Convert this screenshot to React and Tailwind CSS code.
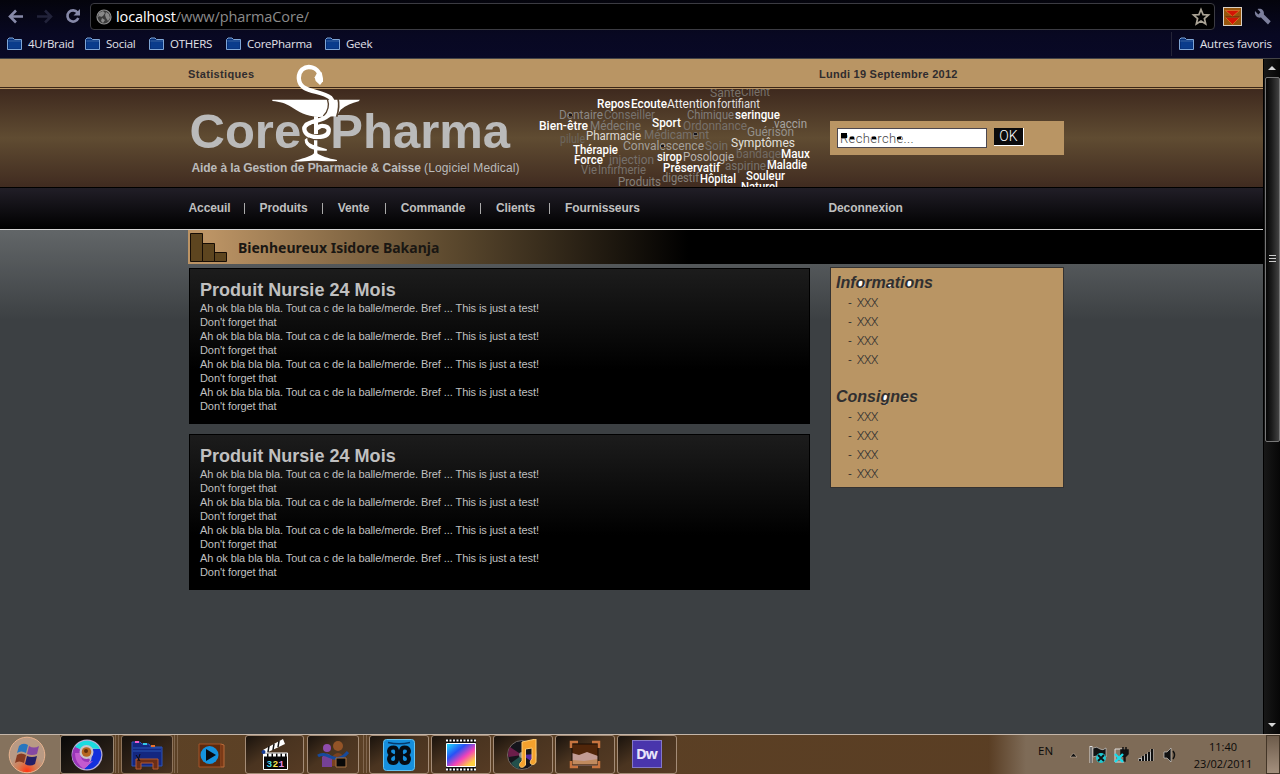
import React from "react";

const folders = [
  { name: "4UrBraid", cls: "w-[78px]" },
  { name: "Social", cls: "w-[64px]" },
  { name: "OTHERS", cls: "w-[77px]" },
  { name: "CorePharma", cls: "w-[99px]" },
  { name: "Geek", cls: "w-[60px]" },
];

function Folder() {
  return (
    <svg width="16" height="14" viewBox="0 0 16 14" className="mr-[5px] shrink-0">
      <path d="M.5 12.5V2.5L2 1H6L7.500 2.5H14.5V12.5Z" fill="#062f78" stroke="#7fa6d6" />
      <path d="M2 5H13.500V11.500H2Z" fill="#0a3c8c" />
      <path d="M1.500 4H14" stroke="#3d6fb0" />
    </svg>
  );
}

function BrowserChrome() {
  return (
    <header className="flex h-[59px] flex-col border-b border-[#444446] bg-linear-to-b/srgb from-[#04040c] via-[#080822] via-60% to-[#090926] font-['Open_Sans',sans-serif]">
      <div className="flex h-[31px] items-end">
        <svg width="90" height="31" viewBox="0 0 90 31" fill="none" className="shrink-0">
          <path d="M23 16.5H11M16 10.5L10 16.5L16 22.5" stroke="#8689a8" strokeWidth="2.6" />
          <path d="M37 16.5H49M45 10.5L51 16.5L45 22.5" stroke="#22233a" strokeWidth="2.6" />
          <path d="M77.5 12.5A5.6 5.6 0 1 0 78.3 18" stroke="#8689a8" strokeWidth="2.6" />
          <path d="M80 9V15.5H73.5Z" fill="#8689a8" />
        </svg>
        <div className="mb-px flex h-[27px] w-[1125px] items-center rounded-[4px] border border-[#3b3b42] bg-black pl-[5px]">
          <svg width="16" height="16" viewBox="0 0 16 16" className="mr-[4px] shrink-0">
            <circle cx="8" cy="8" r="7" fill="#3a3a3a" stroke="#909090" strokeWidth="1.2" />
            <path d="M3 4L7 2L9 4L7 7L5 8L4 7L2 8ZM10 3L13 5L14 9L12 12L10 9L9 6ZM6 9L9 11L7 14L5 12Z" fill="#888" />
          </svg>
          <span className="grow text-[14.5px] leading-[24px] tracking-[-0.1px] text-[#8b8b8b]">
            <span className="text-white">localhost</span>/www/pharmaCore/
          </span>
          <svg width="20" height="20" viewBox="0 0 20 20" className="mr-[3px]">
            <path d="M10 2.5L12.1 7.6L17.5 8L13.4 11.5L14.7 17L10 14.1L5.3 17L6.6 11.5L2.5 8L7.9 7.6Z" fill="none" stroke="#aaa395" strokeWidth="1.7" />
          </svg>
        </div>
        <svg width="20" height="20" viewBox="0 0 20 20" className="mb-[4px] ml-[8px]">
          <rect x=".5" y=".5" width="18" height="18" fill="#96550c" stroke="#d8cfc4" />
          <path d="M2.500 3.500H16.500L9.500 9.500ZM2.500 10.500H16.500L9.500 17.500Z" fill="#d41405" stroke="#e07a2c" strokeWidth=".7" />
          <path d="M2.500 10H16.500" stroke="#6b1a05" />
        </svg>
        <svg width="18" height="18" viewBox="0 0 18 18" className="mb-[5px] ml-[11px]">
          <path d="M1 3L4.3 6.4L6.5 4.2L3.5 1C7 0 10.5 2 9.9 6.5L16.7 13.3L14 16.4L7 9.6C3.5 10.4 .2 7.5 1 3Z" fill="#7c7f9c" />
        </svg>
      </div>
      <div className="flex h-[25px] items-center pl-[7px] text-[11.5px] leading-[16px] tracking-[-0.25px] text-[#e2e2ea]">
        {folders.map((f) => (
          <div key={f.name} className={"flex shrink-0 items-center whitespace-nowrap " + f.cls}>
            <Folder />
            <span>{f.name}</span>
          </div>
        ))}
        <div className="ml-auto flex h-[24px] w-[109px] items-center border-l border-[#252538] pl-[7px] whitespace-nowrap">
          <Folder />
          <span className="tracking-[-0.15px]">Autres favoris</span>
        </div>
      </div>
    </header>
  );
}

// Bowl of Hygieia emblem
function Emblem() {
  return (
    <svg className="absolute top-[5px] left-[272px]" width="88" height="99" viewBox="276 18 264 297" fill="none">
      <path d="M277 125H540L536 130C515 135 498 143 482 155L470 175L416 177C378 174 355 161 333 146C316 136 300 131 277 129Z" fill="#fff" />
      <path d="M442 122Q452 152 430 174" stroke="#54402d" strokeWidth="4" />
      <path d="M474 122Q480 144 470 176" stroke="#54402d" strokeWidth="5" />
      <path d="M402 175H414V228H402ZM402 246H412V286C420 293 445 302 471 306V309C445 312 420 308 402 308C380 307 360 313 342 310C363 302 390 298 402 286Z" fill="#fff" />
      <path d="M419 50C412 28 384 20 367 34C351 50 354 76 371 88C394 103 430 102 451 119C466 136 459 161 443 174C425 190 390 188 378 202" stroke="#fff" strokeWidth="13" />
      <path d="M411 45L425 43L429 61L429 70L420 81L407 69L404 58Z" fill="#fff" />
      <path d="M382 198C365 210 374 230 395 235C420 241 445 235 446 219C449 204 425 200 414 207L418 214" stroke="#fff" strokeWidth="13" />
      <path d="M380 243C381 263 410 265 440 276C415 278 376 272 376 246Z" fill="#fff" stroke="#fff" strokeWidth="4" />
      <path d="M388 240Q397 247 420 245" stroke="#54402d" strokeWidth="3" />
      <path d="M397 198V225" stroke="#54402d" strokeWidth="4" />
    </svg>
  );
}

// [word, x, baseline, width, fill]
const cloud = [
  ["Santé", 180, 13, 31, "#77716a"], ["Client", 211, 12, 29, "#77716a"],
  ["Repos", 67, 24, 33, "#fff"], ["Ecoute", 101, 24, 36, "#fff"], ["Attention", 137, 24, 49, "#eee"], ["fortifiant", 187, 24, 43, "#ddd"],
  ["Dentaire", 29, 35, 44, "#8b8785"], ["Conseiller", 74, 35, 51, "#77736f"], ["Chimique", 157, 35, 47, "#827e7c"], ["seringue", 205, 35, 45, "#fff"],
  ["Bien-être", 9, 46, 49, "#fff"], ["Médecine", 60, 46, 51, "#827e7a"], ["Sport", 122, 43, 29, "#fff"], ["Ordonnance", 153, 46, 64, "#77706a"], ["vaccin", 244, 44, 33, "#a6a3a0"],
  ["pilule", 30, 59, 25, "#6c665e"], ["Pharmacie", 56, 56, 55, "#ddd9d5"], ["Médicament", 114, 55, 65, "#77716b"], ["Guérison", 217, 52, 47, "#94918c"],
  ["Thérapie", 43, 70, 45, "#fff"], ["Convalescence", 93, 66, 81, "#a4a09b"], ["Soin", 175, 66, 23, "#75706b"], ["Symptômes", 201, 63, 64, "#e2e0dd"],
  ["Force", 44, 80, 29, "#fff"], ["injection", 79, 80, 45, "#75706c"], ["sirop", 127, 77, 25, "#fff"], ["Posologie", 153, 77, 51, "#b9b5b1"], ["bandage", 206, 74, 45, "#726a63"], ["Maux", 251, 74, 29, "#fff"],
  ["Vie", 51, 90, 16, "#77716b"], ["Infirmerie", 68, 90, 48, "#77716b"], ["Préservatif", 133, 88, 57, "#fff"], ["aspirine", 195, 86, 41, "#77726d"], ["Maladie", 237, 85, 40, "#fff"],
  ["Produits", 88, 102, 43, "#85807a"], ["digestif", 132, 98, 37, "#85817c"], ["Hôpital", 170, 99, 36, "#fff"], ["Souleur", 216, 96, 39, "#fff"], ["Naturel", 211, 107, 37, "#fff"],
];

function WordCloud() {
  return (
    <svg className="absolute top-[30px] left-[536px] overflow-hidden" width="276" height="98" viewBox="6 5 276 98" fontFamily="Roboto, sans-serif" fontSize="12.5">
      {cloud.map(([w, x, y, len, fill]) => (
        <text key={w} x={x} y={y} textLength={len} lengthAdjust="spacingAndGlyphs" fill={fill} fontWeight={fill === "#fff" ? 500 : 400}>{w}</text>
      ))}
      <path d="M39 30H42V32H39ZM164 49H167V51H164ZM131 61H134V63H131Z" fill="#15131a" />
    </svg>
  );
}

const nav = [
  ["Acceuil", "w-[55px]"], ["Produits", "w-[62px]"], ["Vente", "w-[47px]"],
  ["Commande", "w-[79px]"], ["Clients", "w-[53px]"], ["Fournisseurs", "w-[90px]"],
];

function SiteHeader() {
  return (
    <div className="relative">
      <div className="flex h-[28px] bg-[#b99564] pt-[8px] pl-[188px] text-[11px] leading-[14px] font-bold text-[#302c2e]">
        <span className="w-[631px] tracking-[0.35px]">Statistiques</span>
        <span className="tracking-[0.26px]">Lundi 19 Septembre 2012</span>
      </div>
      <div className="h-px bg-[#3a2617]" />
      <div className="h-px bg-[#b99564]" />
      <div className="flex h-[98px] bg-linear-to-b/srgb from-[#3e291e] via-[#604c32] via-50% to-[#402b20]">
        <div className="w-[830px] pl-[188px]">
          <h1 className="h-[70px] pt-[13px] pl-[1.5px] text-[49px] leading-[58px] font-bold whitespace-pre text-[#bababa] [word-spacing:1px]">Core  Pharma</h1>
          <p className="pl-[3.5px] text-[12px] leading-[18px] whitespace-nowrap text-[#bababa]">
            <b className="tracking-[-0.09px]">Aide à la Gestion de Pharmacie &amp; Caisse</b> <span className="tracking-[0.12px]">(Logiciel Medical)</span>
          </p>
        </div>
        <div className="mt-[32px] flex h-[34px] w-[234px] bg-[#b99564] pt-[7px] pl-[7px]">
          <div className="relative h-[20px] w-[150px] border border-[#4c4850] bg-white pl-[2px] font-[Roboto,sans-serif] text-[13px] leading-[20px] font-light tracking-[0.35px] text-[#444]">
            Recherche...
            <svg className="absolute top-[4px] left-[3px]" width="75" height="9" viewBox="0 0 75 9">
              <path d="M0 0H6V5H0ZM9 4H13V6H9ZM31 4H35V6H31ZM56 4H60V6H56Z" fill="#000" />
            </svg>
          </div>
          <div className="ml-[7px] flex h-[18px] w-[30px] items-center justify-center border-r border-b border-white bg-[#0b0b0d] font-[Roboto,sans-serif] text-[14px] font-light text-white">OK</div>
        </div>
      </div>
      <div className="h-px bg-black" />
      <nav className="flex h-[41px] bg-linear-to-b/srgb from-[#211e27] to-black pt-[12px] pl-[188.5px] text-[12px] leading-[16px] font-bold tracking-[-0.1px] text-[#bfbfbf]">
        {nav.map(([label, w], i) => (
          <React.Fragment key={label}>
            <span className={w}>{label}</span>
            {i < 5 && <span className="mt-[3px] mr-[15.1px] h-[11px] w-px bg-[#aaa]" />}
          </React.Fragment>
        ))}
        <span className="pl-[173.500px]">Deconnexion</span>
      </nav>
      <div className="h-px bg-[#d4d4d4]" />
      <WordCloud />
      <Emblem />
    </div>
  );
}

function Product() {
  return (
    <article className="h-[156px] w-[621px] border border-black bg-linear-to-b/srgb from-[#1c1c1c] to-black to-65% pt-[10px] pl-[10px] text-[#c0c0c0]">
      <h2 className="h-[22px] text-[18px] leading-[22px] font-bold tracking-[0.03px]">Produit Nursie 24 Mois</h2>
      {[0, 1, 2, 3].map((i) => (
        <p key={i} className="text-[11px] leading-[14px] tracking-[-0.08px]">
          Ah ok bla bla bla. Tout ca c de la balle/merde. Bref ... This is just a test!<br />Don't forget that
        </p>
      ))}
    </article>
  );
}

function Block({ title, children }) {
  return (
    <section className="h-[114px]">
      <h3 className="relative h-[25px] pt-[5px] pl-[5px] text-[16px] leading-[20px] font-bold italic">
        {children}
        <span className="relative">{title}</span>
      </h3>
      <ul className="pl-[17px] text-[11.5px] leading-[19px]">
        {[0, 1, 2, 3].map((i) => (
          <li key={i} className="flex gap-[5px]"><span>-</span><span className="font-[Roboto,sans-serif] text-[12.5px] font-light tracking-[-0.75px]">XXX</span></li>
        ))}
      </ul>
    </section>
  );
}

function Page() {
  return (
    <main className="h-[675px] w-[1263px] bg-[#3c4043] font-['Liberation_Sans',Arial,sans-serif]">
      <SiteHeader />
      <div className="flex h-[504px] flex-col bg-linear-to-b/srgb from-[#626668] to-[#3c4043] to-[90px]">
        <div className="ml-[188px] flex h-[34px] bg-linear-to-r/srgb from-[#bc9465] from-[20px] via-[#5c492e] via-[262px] to-black to-[500px] pt-[3px] pl-[2px]">
          <svg width="38" height="30" viewBox="0 0 38 30">
            <path d="M.5 .5H12.5V28.5H.5ZM12.5 10.5H24.5V28.5H12.5ZM24.5 19.5H36.5V28.5H24.5Z" fill="#5d451f" stroke="#160d05" />
          </svg>
          <span className="pt-[5px] pl-[10px] font-['Noto_Sans',sans-serif] text-[14px] leading-[20px] font-bold text-[#1a1713]">Bienheureux Isidore Bakanja</span>
        </div>
        <div className="mt-[3px] flex gap-[20px] pl-[189px]">
          <div className="flex flex-col gap-[10px] pt-px">
            <Product />
            <Product />
          </div>
          <aside className="h-[221px] w-[234px] border border-[#343231] bg-[#b99564] text-[#302f30]">
            <Block title="Informations">
              <svg className="absolute top-px left-0" width="110" height="25" viewBox="0 0 110 25" fill="#fff"><ellipse cx="30.5" cy="15" rx="3.4" ry="3.200" /><ellipse cx="59" cy="17" rx="2.5" ry="1.5" /><ellipse cx="78.5" cy="15" rx="3.4" ry="3.200" /></svg>
            </Block>
            <Block title="Consignes">
              <svg className="absolute top-px left-0" width="110" height="25" viewBox="0 0 110 25" fill="#fff"><ellipse cx="54.5" cy="15" rx="2.8" ry="3" /><ellipse cx="54" cy="21" rx="2.5" ry="1" /><ellipse cx="74.5" cy="14" rx="2.5" ry="1.5" /></svg>
            </Block>
          </aside>
        </div>
      </div>
    </main>
  );
}

function Scrollbar() {
  return (
    <div className="flex w-[17px] flex-col items-center border-l border-black bg-linear-to-r/srgb from-[#171717] to-[#070707]">
      <svg width="16" height="18" viewBox="0 0 16 18"><path d="M4 11L8 7L12 11Z" fill="#d5d5d5" /></svg>
      <div className="flex h-[365px] w-[15px] items-center justify-center rounded-[2px] border border-[#777] bg-linear-to-r/srgb from-[#050505] via-[#1c1c1c] via-45% to-[#424242]">
        <svg width="7" height="9" viewBox="0 0 7 9"><path d="M0 .5H7M0 3.5H7M0 6.5H7" stroke="#ccc" /></svg>
      </div>
      <svg className="mt-auto" width="16" height="18" viewBox="0 0 16 18"><path d="M4 7L8 11L12 7Z" fill="#d5d5d5" /></svg>
    </div>
  );
}

const icons = {
  chrome: (
    <>
      <circle cx="16" cy="16" r="15.500" fill="#b9b0d6" />
      <path d="M16 16L4.500 7A14 14 0 0 0 14 30L19 21Z" fill="#9a35b8" />
      <path d="M9 10L4 8A14.500 14.500 0 0 1 29 10L16 9Z" fill="#1bdbe0" />
      <path d="M16 10H29A14.500 14.500 0 0 1 13 30Q21 24 21 16Z" fill="#1230dc" />
      <path d="M9 14Q10 26 22 22L13 30Q4 24 4 14Z" fill="#c35ad0" />
      <circle cx="15.500" cy="13" r="7" fill="#c9c3c9" /><circle cx="15.500" cy="13" r="4.800" fill="#b5651f" /><circle cx="15" cy="12" r="2" fill="#5d2c0c" />
    </>
  ),
  explorer: (
    <>
      <path d="M1 27V3H9L11 5H18L20 8H31V27Z" fill="#142780" stroke="#2c55b8" />
      <path d="M2 9H30M2 12H30" stroke="#2b56b5" />
      <path d="M4 3H8" stroke="#f05ccc" strokeWidth="2" /><path d="M12 5H16" stroke="#35c7e6" strokeWidth="2" /><path d="M20 7H24" stroke="#e8702c" strokeWidth="2" />
      <path d="M5 20H27V30H22V24H10V30H5Z" fill="#6b2d16" stroke="#b65a30" />
      <path d="M5 16L9 22M9 15L7 22" stroke="#0a0a14" />
    </>
  ),
  media: (
    <>
      <path d="M4 5H26V28H4Z" fill="#5d2a0e" stroke="#a65529" /><path d="M26 5L29 6V28H26" fill="#7b3a17" stroke="#b86b3a" />
      <circle cx="14.500" cy="16" r="9" fill="#1593df" /><path d="M11 10L21 16L11 22Z" fill="#080b12" />
    </>
  ),
  clapper: (
    <>
      <path d="M4 11L24 0L26 5L5 15Z" fill="#fff" /><path d="M9 13L10 7M14 11L15 5M19 8L20 2" stroke="#111" strokeWidth="1.500" />
      <path d="M4.500 14H28.500V30.500H4.500Z" fill="#080808" stroke="#fff" /><path d="M5 16H28" stroke="#fff" strokeWidth="3" strokeDasharray="3 1.500" />
      <circle cx="4.500" cy="13" r="2" fill="#173c95" />
      <g fontFamily="Liberation Mono, monospace" fontSize="9.500" fontWeight="700"><text x="7.500" y="28" fill="#48dcee">3</text><text x="13.500" y="28" fill="#f4e34b">2</text><text x="19.500" y="28" fill="#e68ee9">1</text></g>
    </>
  ),
  people: (
    <>
      <circle cx="10" cy="9" r="4" fill="#8f4cac" /><path d="M5 28V18Q10 11 15 18V28Z" fill="#754197" />
      <circle cx="21" cy="7" r="5" fill="#945427" /><path d="M15 27V18Q21 10 27 18V27Z" fill="#79421f" />
      <path d="M1 17C11 10 17 29 31 13" fill="none" stroke="#164a9c" strokeWidth="3" /><path d="M19 19H29V28H19Z" fill="#080808" stroke="#aa7545" />
    </>
  ),
  xampp: (
    <>
      <rect x=".5" y=".5" width="31" height="31" rx="3" fill="#168fdd" stroke="#66c4f1" />
      <path d="M5 3.500Q16 6 27 3.500" stroke="#063a6d" strokeWidth="1.500" fill="none" />
      <path d="M10.500 8.500C5 8.500 5 14 8.500 16C5 18 5 24 10.500 24C15 24 14 18 14 18H18C18 18 17 24 21.500 24C27 24 27 18 23.500 16C27 14 27 8.500 21.500 8.500C17 8.500 18 14 18 14H14C14 14 15 8.500 10.500 8.500Z" fill="#168fdd" stroke="#060b13" strokeWidth="4" />
    </>
  ),
  film: (
    <>
      <defs><linearGradient id="film" x2="1" y2="1"><stop stopColor="#1be6fc" /><stop offset=".35" stopColor="#2852f5" /><stop offset=".6" stopColor="#f443b8" /><stop offset=".85" stopColor="#ffce43" /></linearGradient></defs>
      <path d="M1 0H31V32H1Z" fill="#101010" /><path d="M1.500 4.500H30.500V27.500H1.500Z" fill="url(#film)" stroke="#fff" />
      <path d="M1 1.500H31M1 30.500H31" stroke="#fff" strokeWidth="2" strokeDasharray="2 1.500" />
    </>
  ),
  music: (
    <>
      <circle cx="15" cy="16" r="14.500" fill="#15151b" stroke="#736964" /><path d="M15 16L3 8A14 14 0 0 0 1.500 18Z" fill="#6b1d49" /><path d="M15 16L4 24A14 14 0 0 0 12 30Z" fill="#23504b" /><path d="M15 16L29 15A14 14 0 0 1 27 24Z" fill="#552ca5" />
      <circle cx="15" cy="16" r="3" fill="#888" />
      <path d="M15 3L29 0V23C27 28 20 25 25 20V9L18.500 10V26C15 31 9 27 15 22Z" fill="#f4a12d" stroke="#ffcc72" />
    </>
  ),
  photo: (
    <>
      <path d="M3 5H29V27H3Z" fill="#c39c94" /><path d="M3 5H29V17L18 13L10 16L3 14Z" fill="#51260a" /><path d="M3 21L15 22L29 20V26H3Z" fill="#c08a5e" />
      <path d="M3 5H29V26H3Z" fill="none" stroke="#1a0d05" />
      <path d="M2 9V3H9M23 3H30V9M2 22V28H9M23 28H30V22" fill="none" stroke="#c8743f" strokeWidth="2.500" />
    </>
  ),
  dw: (
    <>
      <rect x="1.500" y="1.500" width="29" height="27" fill="#4935ac" stroke="#8478c7" />
      <text x="5" y="19.500" fill="#e8e4fa" fontFamily="Open Sans, sans-serif" fontSize="14.500" fontWeight="700" textLength="22">Dw</text>
    </>
  ),
};

const plain = "bg-linear-to-br/srgb from-[#1a130d] via-[#4a3420] via-45% to-[#563b24] border-[#a48c77]";

const tasks = [
  ["chrome", "w-[54px] bg-linear-to-br/srgb from-[#080808] to-[#35281d] border-[#9a8773]", "mr-[7px]"],
  ["explorer", "w-[52px] bg-linear-to-br/srgb from-[#16110d] to-[#4a3320] border-[#8e745c]", "mr-[7px]"],
  ["media", "w-[58px] border-transparent pl-[3px]", "mr-[7px]"],
  ["clapper", "w-[59px] " + plain, "mr-[3px]"],
  ["people", "w-[52px] " + plain, "mr-[10px]"],
  ["xampp", "w-[60px] " + plain, "mr-[2px]"],
  ["film", "w-[60px] " + plain, "mr-[2px]"],
  ["music", "w-[60px] " + plain, "mr-[2px]"],
  ["photo", "w-[60px] " + plain, "mr-[2px]"],
  ["dw", "w-[60px] " + plain, ""],
];

function Stack() {
  return <span className="mr-[2px] -ml-[6px] h-[38px] w-[4px] border-x border-[#80664d]" />;
}

function Taskbar() {
  return (
    <footer className="flex h-[40px] border-t border-[#c4b6a9] bg-linear-to-r/srgb from-[#5d4226] to-[#593d23] font-['Open_Sans',sans-serif] text-[#0b0a09]">
      <div className="flex w-[60px] items-center bg-[#85725d] pl-[8px]">
        <svg width="38" height="38" viewBox="0 0 38 38">
          <defs><radialGradient id="orb" cx=".5" cy=".95"><stop stopColor="#ff3512" /><stop offset=".5" stopColor="#d77a50" /><stop offset="1" stopColor="#b99a84" /></radialGradient></defs>
          <circle cx="19" cy="19" r="17.800" fill="url(#orb)" stroke="#e9b38e" />
          <path d="M11 10Q15 6 20 9L18 17Q13 14 9 17Z" fill="#2876bf" /><path d="M21 10Q26 13 31 10L29 18Q24 20 19 18Z" fill="#8548a3" />
          <path d="M9 19Q13 16 18 19L16 27Q11 24 7 27Z" fill="#863a20" /><path d="M19 20Q24 22 29 20L27 28Q22 31 17 28Z" fill="#231f66" />
        </svg>
      </div>
      {tasks.map(([id, cls, gap]) => (
        <React.Fragment key={id}>
          <div className={"flex h-[39px] shrink-0 items-center justify-center rounded-[3px] border " + cls + " " + gap}>
            <svg width="32" height="32" viewBox="0 0 32 32">{icons[id]}</svg>
          </div>
          {(id === "chrome" || id === "explorer" || id === "people") && <Stack />}
        </React.Fragment>
      ))}
      <div className="ml-auto flex h-full w-[292px] bg-linear-to-r/srgb from-[#593d23] to-[#7e6b57] to-[38px]">
        <span className="ml-[50px] w-[32px] pt-[8px] text-[11.5px] leading-[16px]">EN</span>
        <svg width="114" height="39" viewBox="0 0 114 39" className="shrink-0">
          <path d="M0 22L3.500 18L7 22Z" fill="#111" stroke="#c9b6a3" strokeWidth=".6" />
          <path d="M21 11V28" stroke="#ddd" strokeWidth="3" /><path d="M21 12V28" stroke="#111" />
          <path d="M23 13Q27 11 30 14Q33 16 36 13V22Q33 24 30 22Q26 20 23 22Z" fill="#111" stroke="#ddd" strokeWidth=".6" />
          <circle cx="31" cy="23" r="5" fill="#20c9d2" /><path d="M28 20L34 26M34 20L28 26" stroke="#111" strokeWidth="1.800" />
          <path d="M45 14H54V27H45Z" fill="#8a7865" stroke="#ddd" /><path d="M51 15H58V19L55 22V26H54V22L51 20ZM53 15V12M56 15V12" fill="#111" stroke="#111" strokeWidth="1.500" />
          <path d="M45 19L53 27M53 19L45 27" stroke="#19ddeb" strokeWidth="2.400" />
          <path d="M70 23V26M73 21V26M76 19V26M79 17V26M82 14V26" stroke="#bbb" strokeWidth="3" /><path d="M70 24V26M73 21V26M76 19V26M79 17V26M82 14V26" stroke="#111" strokeWidth="2" />
          <path d="M94 17H97L101 13V27L97 23H94Z" fill="#111" stroke="#ddd" strokeWidth=".6" /><path d="M103 16Q106 20 103 24" fill="none" stroke="#111" strokeWidth="1.500" />
        </svg>
        <div className="w-[78px] pt-[3px] text-center text-[11px] leading-[17px]">11:40<br />23/02/2011</div>
        <div className="ml-auto h-[39px] w-[14px] border border-[#433527] bg-linear-to-b/srgb from-[#6d5b4a] to-[#a4907e]" />
      </div>
    </footer>
  );
}

export default function App() {
  return (
    <div className="flex h-[774px] w-[1280px] flex-col overflow-hidden bg-[#3c4043]">
      <BrowserChrome />
      <div className="flex h-[675px]">
        <Page />
        <Scrollbar />
      </div>
      <Taskbar />
    </div>
  );
}
